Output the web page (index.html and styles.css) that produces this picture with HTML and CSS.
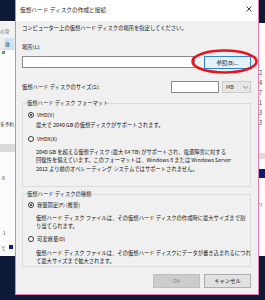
FILE: index.html
```html
<!DOCTYPE html>
<html lang="ja">

<head>
    <meta charset="UTF-8">
    <meta name="viewport" content="width=device-width, initial-scale=1.0">
    <title>仮想ハード ディスクの作成と接続</title>
    <link rel="stylesheet" href="styles.css">
</head>

<body>
    <!-- window behind the dialog -->
    <div class="backwin">
        <div class="strip strip--left">
            <svg class="logo" width="15" height="21" viewBox="0 0 15 21">
                <path d="M3 4 C6 7 8 11 9 19" stroke="#cfe3f4" stroke-width="2.6" fill="none" stroke-linecap="round" />
            </svg>
            <div class="strip__menu">の管</div>
            <div class="strip__tabs"><span class="strip__tab">操</span></div>
            <div class="strip__icons"><span class="strip__green"></span></div>
            <div class="strip__line strip__line--a">を予約</div>
            <div class="strip__bar"></div>
            <div class="strip__line strip__line--b">0</div>
            <div class="strip__line strip__line--c">1</div>
            <div class="strip__line strip__line--d">て<span class="strip__square"></span></div>
        </div>
        <div></div>
        <div class="strip strip--right">
            <div class="strip__top"></div>
            <ul class="strip__nums">
                <li>2</li>
                <li>4</li>
                <li>7</li>
                <li>1</li>
                <li>3</li>
                <li>3</li>
            </ul>
            <div class="strip__bar strip__bar--right"></div>
            <div class="strip__navy"></div>
            <div class="strip__line strip__line--e">リ</div>
        </div>
    </div>

    <div class="dialog">
        <div class="titlebar">
            <span class="titlebar__text">仮想ハード ディスクの作成と接続</span>
            <svg class="titlebar__close" width="6" height="6" viewBox="0 0 6 6">
                <path d="M0.5 0.5 L5.5 5.5 M5.5 0.5 L0.5 5.5" stroke="#111" stroke-width="0.8" />
            </svg>
        </div>
        <div class="dialog__body">
            <p class="intro">コンピューター上の仮想ハード ディスクの場所を指定してください。</p>
            <div class="field-label">場所(L):</div>
            <div class="row row--location">
                <div class="textbox textbox--wide"></div>
                <button class="btn btn--focus">参照(B)...</button>
            </div>
            <div class="row row--size">
                <span class="row__label">仮想ハード ディスクのサイズ(S):</span>
                <div class="textbox textbox--size"></div>
                <div class="combo">
                    <span>MB</span>
                    <svg width="5" height="3" viewBox="0 0 5 3">
                        <path d="M0.3 0.3 L2.5 2.5 L4.7 0.3" stroke="#666" stroke-width="0.7" fill="none" />
                    </svg>
                </div>
            </div>

            <fieldset class="group group--format">
                <legend>仮想ハード ディスク フォーマット</legend>
                <div class="radio-row radio-row--first"><span class="radio radio--on"></span>VHD(V)</div>
                <p class="desc desc--near">最大で 2040 GB の仮想ディスクがサポートされます。</p>
                <div class="radio-row radio-row--second"><span class="radio"></span>VHDX(X)</div>
                <p class="desc">2040 GB を超える仮想ディスク (最大 64 TB) がサポートされ、電源障害に対する<br>回復性を備えています。このフォーマットは、Windows 8 または Windows Server<br>2012 より前のオペレーティング システムではサポートされません。</p>
            </fieldset>

            <fieldset class="group group--type">
                <legend>仮想ハード ディスクの種類</legend>
                <div class="radio-row radio-row--tight"><span class="radio radio--on"></span>容量固定(F) (推奨)</div>
                <p class="desc">仮想ハード ディスク ファイルは、その仮想ハード ディスクの作成時に最大サイズまで割<br>り当てられます。</p>
                <div class="radio-row radio-row--mid"><span class="radio"></span>可変容量(D)</div>
                <p class="desc desc--far">仮想ハード ディスク ファイルは、その仮想ハード ディスクにデータが書き込まれるにつれ<br>て最大サイズまで拡大されます。</p>
            </fieldset>

            <div class="buttons">
                <button class="btn btn--disabled">OK</button>
                <button class="btn">キャンセル</button>
            </div>
        </div>
    </div>

    <!-- red annotation around the browse button -->
    <svg class="mark" width="68" height="27" viewBox="0 0 68 27">
        <ellipse cx="33.5" cy="12.5" rx="32" ry="11" stroke="#e6141c" stroke-width="2.6" fill="none" />
    </svg>
</body>

</html>
```

FILE: styles.css
```css
* {
    box-sizing: border-box;
}

body {
    margin: 0;
    width: 265px;
    height: 300px;
    overflow: hidden;
    position: relative;
    background-color: #0c1a38;
    font-family: "Noto Sans CJK JP", sans-serif;
    font-size: 5.3px;
    color: #111;
}

/* window behind */

.backwin {
    margin-top: 21px;
    height: 235px;
    display: grid;
    grid-template-columns: 15px 1fr 7px;
}

.strip {
    background-color: #fbfbfb;
    color: #555;
    font-size: 4.8px;
    overflow: hidden;
    white-space: nowrap;
}

.strip--left {
    position: relative;
}

.logo {
    position: absolute;
    top: -21px;
    left: 0;
}

.strip__menu {
    height: 17px;
    line-height: 18px;
    background-color: #f2f2f2;
    border-top: 1px solid #fff;
    color: #777;
}

.strip__tabs {
    height: 12px;
    background-color: #eeeeee;
    border-bottom: 1px solid #dadada;
    padding-left: 5px;
}

.strip__tab {
    display: inline-block;
    width: 9px;
    height: 11px;
    line-height: 11px;
    background-color: #cde4f6;
    color: #1d3d6b;
}

.strip__icons {
    height: 6px;
    background-color: #fff;
    padding: 1px 0 0 2px;
}

.strip__green {
    display: block;
    width: 3px;
    height: 3px;
    background-color: #5aa15a;
}

.strip__line {
    height: 9px;
    line-height: 9px;
    color: #333;
}

.strip__line--a {
    margin-top: 62.5px;
    letter-spacing: -0.2px;
}

.strip__bar {
    margin-top: 16.5px;
    height: 8px;
    background-color: #dadada;
}

.strip__line--b {
    margin-top: 20.5px;
    padding-left: 2px;
}

.strip__line--c {
    margin-top: 46px;
    padding-left: 3px;
}

.strip__line--d {
    margin-top: 6px;
    padding-left: 1px;
    display: flex;
    align-items: center;
    gap: 3px;
}

.strip__square {
    width: 4px;
    height: 4px;
    background-color: #0b1d7a;
}

.strip__top {
    height: 2px;
    background-color: #0c1a38;
}

.strip__nums {
    list-style: none;
    margin: 45px 0 0;
    padding: 0 0 0 1px;
    line-height: 10px;
    font-size: 5.5px;
    color: #333;
}

.strip__bar--right {
    margin-top: 25px;
    height: 6px;
}

.strip__navy {
    margin-top: 10px;
    height: 9px;
    background-color: #0b1d7a;
}

.strip__line--e {
    margin-top: 21px;
}

/* dialog */

.dialog {
    position: absolute;
    left: 15px;
    top: -1px;
    width: 244px;
    height: 296px;
    border: 1px solid #e47eb2;
    display: flex;
    flex-direction: column;
    background-color: #f0f0f0;
}

.titlebar {
    height: 21px;
    flex-shrink: 0;
    background-color: #fff;
    display: flex;
    align-items: center;
    justify-content: space-between;
    padding: 0 6px 3px 4px;
}

.titlebar__text {
    font-size: 5.7px;
    color: #222;
}

.dialog__body {
    flex: 1;
    padding: 2.5px 7px 0 6px;
    white-space: nowrap;
}

.intro {
    margin: 0;
    line-height: 9px;
}

.field-label {
    margin-top: 10px;
    line-height: 9px;
}

.row {
    display: flex;
    align-items: center;
}

.row--location {
    margin-top: 4.5px;
    height: 13px;
    gap: 9px;
}

.row--size {
    margin-top: 12px;
    height: 12px;
    gap: 3px;
}

.row__label {
    flex: 1;
}

.textbox {
    background-color: #fff;
    border: 1px solid #8a8a8a;
    height: 100%;
}

.textbox--wide {
    flex: 1;
    height: 12px;
    align-self: flex-start;
}

.textbox--size {
    width: 48px;
}

.combo {
    width: 29px;
    height: 100%;
    background-color: #e6e6e6;
    border: 1px solid #cccccc;
    display: flex;
    align-items: center;
    justify-content: space-between;
    padding: 0 2px 0 3px;
    color: #333;
}

.btn {
    font-family: inherit;
    font-size: 5.3px;
    color: #111;
    background-color: #e1e1e1;
    border: 1px solid #adadad;
    padding: 0;
    width: 47px;
    height: 14px;
}

.row--location .btn {
    height: 13px;
}

.btn--focus {
    background-color: #e5f1fb;
    border-color: #2b84d6;
}

.btn--disabled {
    background-color: #cccccc;
    border-color: #bfbfbf;
    color: #8a8a8a;
}

.group {
    margin: 0;
    min-width: 0;
    border: 1px solid #dcdcdc;
    padding: 0 0 0 5px;
}

.group legend {
    padding: 0;
    margin-left: -1px;
    line-height: 9px;
    color: #222;
}

.group--format {
    margin-top: 5.5px;
    padding-bottom: 12.75px;
}

.group--type {
    margin-top: 2.5px;
}

.radio-row {
    height: 9px;
    display: flex;
    align-items: center;
    gap: 3px;
}

.radio-row--first {
    margin-top: 3px;
}

.radio-row--second {
    margin-top: 5.25px;
}

.radio-row--tight {
    margin-top: 2px;
}

.radio-row--mid {
    margin-top: 3.75px;
}

.radio {
    width: 6px;
    height: 6px;
    border: 1px solid #333;
    border-radius: 50%;
    background-color: #fff;
    display: flex;
    align-items: center;
    justify-content: center;
}

.radio--on::after {
    content: "";
    width: 2.6px;
    height: 2.6px;
    border-radius: 50%;
    background-color: #222;
}

.desc {
    margin: 4.25px 0 0;
    padding-left: 8px;
    line-height: 8.5px;
}

.desc--near {
    margin-top: 1.25px;
}

.desc--far {
    margin-top: 5.25px;
}

.buttons {
    margin-top: 7.25px;
    display: flex;
    justify-content: flex-end;
    gap: 4px;
}

.mark {
    position: absolute;
    left: 191px;
    top: 49px;
}
```
